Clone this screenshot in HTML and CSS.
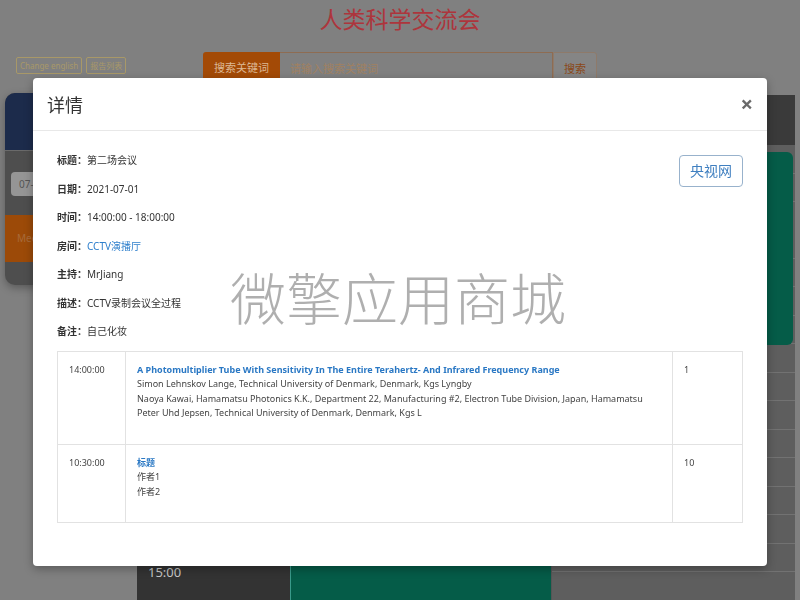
FILE: index.html
```html
<!DOCTYPE html>
<html lang="zh-CN">

<head>
     <meta charset="utf-8">
     <title>人类科学交流会</title>
     <link rel="stylesheet" href="styles.css">
</head>

<body>
     <div class="page">
          <h1 class="site-title">人类科学交流会</h1>

          <div class="toolbar">
               <div class="links">
                    <a class="tag-btn">Change english</a>
                    <a class="tag-btn">报告列表</a>
               </div>
               <div class="search">
                    <span class="search-label">搜索关键词</span>
                    <input class="search-input" type="text" placeholder="请输入搜索关键词">
                    <button class="search-btn">搜索</button>
               </div>
          </div>

          <div class="schedule">
               <div class="date-card">
                    <div class="date-head">会议日期</div>
                    <div class="date-body">
                         <div class="date-input">07-01</div>
                         <div class="date-active">Meeting</div>
                    </div>
               </div>

               <div class="timetable">
                    <div class="th">时间</div>
                    <div class="th">CCTV演播厅</div>
                    <div class="th">会议室</div>

                    <div class="hour" style="grid-row: 2 / 4">08:00</div>
                    <div class="hour" style="grid-row: 4 / 6">09:00</div>
                    <div class="hour" style="grid-row: 6 / 8">10:00</div>
                    <div class="hour" style="grid-row: 8 / 10">11:00</div>
                    <div class="hour" style="grid-row: 10 / 12">12:00</div>
                    <div class="hour" style="grid-row: 12 / 14">13:00</div>
                    <div class="hour" style="grid-row: 14 / 16">14:00</div>
                    <div class="hour" style="grid-row: 16 / 18">15:00</div>

                    <div class="room room-a"></div>
                    <div class="room room-b"></div>

                    <div class="event event-a" style="grid-row: 14 / 18"></div>
                    <div class="event event-b" style="grid-row: 2 / 9"></div>
               </div>
          </div>
     </div>

     <div class="modal">
          <div class="modal-header">
               <h4 class="modal-title">详情</h4>
               <span class="modal-close">&times;</span>
          </div>
          <div class="modal-body">
               <div class="detail">
                    <ul class="fields">
                         <li><b>标题：</b>第二场会议</li>
                         <li><b>日期：</b>2021-07-01</li>
                         <li><b>时间：</b>14:00:00 - 18:00:00</li>
                         <li><b>房间：</b><a class="link">CCTV演播厅</a></li>
                         <li><b>主持：</b>MrJiang</li>
                         <li><b>描述：</b>CCTV录制会议全过程</li>
                         <li><b>备注：</b>自己化妆</li>
                    </ul>
                    <a class="site-btn">央视网</a>
               </div>

               <table class="reports">
                    <tr>
                         <td class="col-time">14:00:00</td>
                         <td class="col-info">
                              <a class="report-title">A Photomultiplier Tube With Sensitivity In The Entire Terahertz- And Infrared Frequency Range</a>
                              <div>Simon Lehnskov Lange, Technical University of Denmark, Denmark, Kgs Lyngby</div>
                              <div>Naoya Kawai, Hamamatsu Photonics K.K., Department 22, Manufacturing #2, Electron Tube Division, Japan, Hamamatsu</div>
                              <div>Peter Uhd Jepsen, Technical University of Denmark, Denmark, Kgs L</div>
                         </td>
                         <td class="col-num">1</td>
                    </tr>
                    <tr>
                         <td class="col-time">10:30:00</td>
                         <td class="col-info">
                              <a class="report-title">标题</a>
                              <div>作者1</div>
                              <div>作者2</div>
                         </td>
                         <td class="col-num">10</td>
                    </tr>
               </table>
          </div>

          <div class="watermark">微擎应用商城</div>
     </div>
</body>

</html>
```

FILE: styles.css
```css
body {
     margin: 0;
     background-color: #808080;
     font-family: "Noto Sans", "Noto Sans CJK SC", sans-serif;
     overflow: hidden;
}

/* page behind the dialog (already dimmed) */

.site-title {
     margin: 0;
     height: 38px;
     line-height: 38px;
     text-align: center;
     font-size: 23px;
     font-weight: normal;
     color: #ad353c;
}

.toolbar {
     display: flex;
     margin-top: 14px;
     padding-left: 16px;
}

.links {
     width: 187px;
     display: flex;
     align-items: flex-start;
     gap: 4px;
     padding-top: 5px;
}

.tag-btn {
     height: 15px;
     line-height: 15px;
     padding: 0 3px;
     border: 1px solid #a89868;
     border-radius: 2px;
     font-size: 8px;
     color: #a89868;
}

.search {
     display: flex;
     width: 394px;
     height: 32px;
}

.search-label {
     width: 77px;
     line-height: 32px;
     text-align: center;
     font-size: 11px;
     color: #dcb894;
     background-color: #a34a06;
     border-radius: 3px 0 0 3px;
}

.search-input {
     flex: 1;
     min-width: 0;
     margin: 0;
     padding: 0 10px;
     font-family: inherit;
     font-size: 11px;
     background-color: #808080;
     border: 1px solid #8e6c52;
     border-left: none;
     outline: none;
}

.search-input::placeholder {
     color: #a08060;
}

.search-btn {
     width: 44px;
     padding: 0;
     font-family: inherit;
     font-size: 11px;
     color: #8a4818;
     background-color: #858585;
     border: 1px solid #8e7a6a;
     border-radius: 0 3px 3px 0;
}

.schedule {
     display: flex;
     align-items: flex-start;
     gap: 2px;
     margin-top: 9px;
     padding: 0 5px;
}

.date-card {
     width: 130px;
     height: 192px;
     border-radius: 10px;
     overflow: hidden;
     background-color: #4e4e4e;
     box-shadow: 0 3px 8px rgba(0, 0, 0, 0.3);
}

.date-head {
     height: 57px;
     line-height: 57px;
     text-align: center;
     font-size: 12px;
     color: #8890a0;
     background-color: #1c2b4b;
     border-bottom: 1px solid #6a6a6a;
}

.date-body {
     padding: 21px 6px 0;
}

.date-input {
     height: 24px;
     line-height: 24px;
     padding-left: 8px;
     font-size: 10px;
     color: #555;
     background-color: #959595;
     border-radius: 4px;
}

.date-active {
     height: 47px;
     line-height: 47px;
     margin: 19px -6px 0;
     padding-left: 12px;
     font-size: 10px;
     color: #a86a3a;
     background-color: #9c4a08;
}

.timetable {
     flex: 1;
     display: grid;
     grid-template-columns: 153px 261px 1fr;
     grid-template-rows: 50px repeat(16, 28.5px);
     margin-top: 2px;
}

.th {
     grid-row: 1;
     background-color: #3a3a3a;
     color: #aaa;
     font-size: 12px;
     text-align: center;
     line-height: 50px;
}

.hour {
     grid-column: 1;
     display: flex;
     align-items: center;
     padding-left: 11px;
     font-size: 13px;
     color: #c8c8c8;
     background-color: #333;
     border-bottom: 1px solid #2a2a2a;
}

.room {
     grid-row: 2 / -1;
     background-color: #5e5e5e;
     background-image: repeating-linear-gradient(to bottom, transparent 0, transparent 27.5px, #727272 27.5px, #727272 28.5px);
}

.room-a {
     grid-column: 2;
}

.room-b {
     grid-column: 3;
     border-left: 1px solid #555;
}

.event {
     background-color: #055c48;
     border-radius: 6px;
}

.event-a {
     grid-column: 2;
     border-radius: 0;
     border-left: 1px solid #3a9a8a;
}

.event-b {
     grid-column: 3;
     margin: 7px 2px 0 2px;
}

/* dialog */

.modal {
     position: fixed;
     top: 78px;
     left: 33px;
     width: 734px;
     height: 488px;
     background-color: #fff;
     border-radius: 4px;
     box-shadow: 0 3px 10px rgba(0, 0, 0, 0.3);
     color: #333;
}

.modal-header {
     display: flex;
     align-items: center;
     justify-content: space-between;
     height: 52px;
     padding: 0 14px;
     border-bottom: 1px solid #e8e8e8;
}

.modal-title {
     margin: 0;
     font-size: 18px;
     font-weight: normal;
     color: #333;
}

.modal-close {
     font-size: 22px;
     font-weight: bold;
     line-height: 1;
     color: #6a6a6a;
     margin-top: -3px;
}

.modal-body {
     padding: 15px 24px 0;
}

.detail {
     display: flex;
     justify-content: space-between;
     align-items: flex-start;
}

.fields {
     list-style: none;
     margin: 0;
     padding: 0;
}

.fields li {
     height: 28.5px;
     line-height: 28.5px;
     font-size: 10px;
     color: #333;
}

.fields b {
     font-weight: bold;
     color: #333;
}

.link {
     color: #2e7fcc;
}

.site-btn {
     margin-top: 9px;
     width: 62px;
     height: 30px;
     line-height: 30px;
     text-align: center;
     font-size: 14px;
     color: #3f7fc0;
     border: 1px solid #98b2cc;
     border-radius: 4px;
}

.reports {
     width: 100%;
     margin-top: 5px;
     border-collapse: collapse;
     border: 1px solid #e2e2e2;
     font-size: 9px;
     color: #444;
}

.reports td {
     vertical-align: top;
     line-height: 14.5px;
     padding: 11px 11px 23px;
     border: 1px solid #e2e2e2;
}

.col-time {
     width: 45px;
}

.col-num {
     width: 47px;
}

.report-title {
     font-weight: bold;
     color: #2a78c4;
}

.watermark {
     position: absolute;
     top: 177px;
     left: 197px;
     font-size: 56px;
     font-weight: 300;
     color: rgba(110, 110, 110, 0.55);
     pointer-events: none;
}
```
